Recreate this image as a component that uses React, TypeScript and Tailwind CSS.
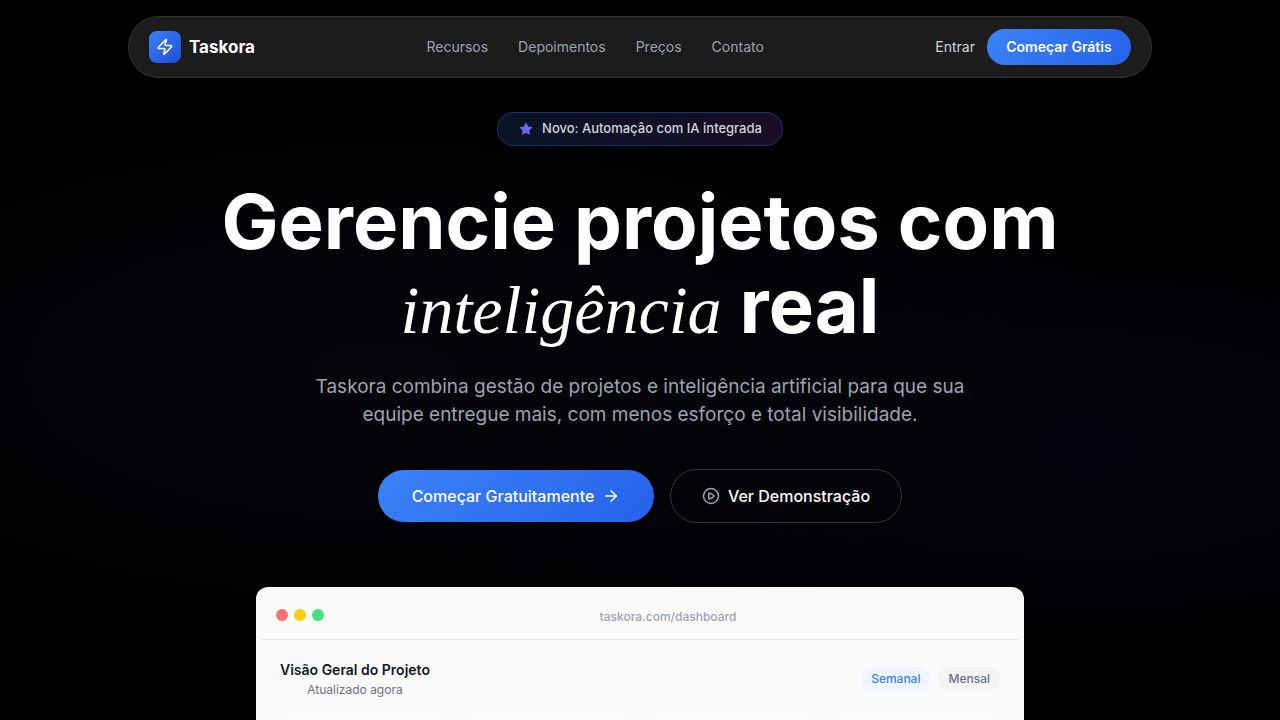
import { ArrowRight, CirclePlay, Zap } from 'lucide-react';

const navLinks = [
  { label: 'Recursos', href: '#recursos' },
  { label: 'Depoimentos', href: '#depoimentos' },
  { label: 'Preços', href: '#precos' },
  { label: 'Contato', href: '#contato' },
];

function Navbar() {
  return (
    <header className="w-full max-w-5xl rounded-full border border-white/10 bg-white/11 px-5 py-3">
      <div className="flex items-center justify-between gap-4">
        <a href="#" className="flex items-center gap-2">
          <span className="flex h-8 w-8 items-center justify-center rounded-lg bg-linear-135/srgb from-[#3b82f6] to-[#1d4ed8]">
            <Zap className="h-[18px] w-[18px] text-white" />
          </span>
          <span className="text-[17px] font-bold leading-6 text-white">Taskora</span>
        </a>

        <nav className="hidden gap-[30px] md:flex">
          {navLinks.map((link) => (
            <a key={link.href} href={link.href} className="text-sm text-[#9ca3af] hover:text-white">
              {link.label}
            </a>
          ))}
        </nav>

        <div className="flex items-center gap-3">
          <a href="#entrar" className="text-sm text-[#d1d5db] hover:text-white">
            Entrar
          </a>
          <button
            type="button"
            className="flex h-9 min-w-36 items-center justify-center rounded-full bg-linear-135/srgb from-[#3b82f6] to-[#2563eb] text-sm font-semibold text-white"
          >
            Começar Grátis
          </button>
        </div>
      </div>
    </header>
  );
}

function NewsBadge() {
  return (
    <div className="mt-[34px] flex h-[34px] min-w-[286px] items-center justify-center gap-2 rounded-full border border-[#3b82f6]/30 bg-linear-to-r/srgb from-[#3b82f6]/15 to-[#a855f7]/15 px-4">
      <svg className="h-4 w-4" viewBox="0 0 24 24" aria-hidden="true">
        <defs>
          <linearGradient id="star" x1="0" y1="0" x2="1" y2="1">
            <stop offset="0" stopColor="#4f7cff" />
            <stop offset="1" stopColor="#7c5cf6" />
          </linearGradient>
        </defs>
        <path
          fill="url(#star)"
          d="M12 2l3.09 6.26L22 9.27l-5 4.87 1.18 6.88L12 17.77l-6.18 3.25L7 14.14 2 9.27l6.91-1.01L12 2z"
        />
      </svg>
      <span className="text-[13px] font-medium text-[#d1d5db]">Novo: Automação com IA integrada</span>
    </div>
  );
}

function DashboardPreview() {
  return (
    <div className="mt-16 w-full max-w-3xl rounded-xl bg-[#fafafa] px-1 pt-1">
      <div className="flex h-[49px] items-center border-b border-[#e5e7eb] px-4">
        <div className="flex gap-[6px]">
          <span className="h-3 w-3 rounded-full bg-[#f87171]" />
          <span className="h-3 w-3 rounded-full bg-[#facc15]" />
          <span className="h-3 w-3 rounded-full bg-[#4ade80]" />
        </div>
        <p className="flex-1 pl-2 pt-[3px] text-center text-xs font-medium text-[#9ca3af]">taskora.com/dashboard</p>
      </div>

      <div className="px-5 pt-5">
        <div className="flex items-center justify-between">
          <div className="text-center">
            <h2 className="text-sm font-semibold text-[#111827]">Visão Geral do Projeto</h2>
            <p className="mt-[2px] text-xs text-[#6b7280]">Atualizado agora</p>
          </div>
          <div className="flex gap-2">
            <button
              type="button"
              className="h-6 rounded-full bg-[#eff6ff] px-[10px] text-xs font-medium text-[#3b82f6]"
            >
              Semanal
            </button>
            <button
              type="button"
              className="h-6 rounded-full bg-[#f3f4f6] px-[10px] text-xs font-medium text-[#6b7280]"
            >
              Mensal
            </button>
          </div>
        </div>

        <div className="mt-5 grid grid-cols-4 gap-3">
          <div className="h-6 rounded-lg border border-[#f3f4f6] bg-white" />
          <div className="h-6 rounded-lg border border-[#f3f4f6] bg-white" />
          <div className="h-6 rounded-lg border border-[#f3f4f6] bg-white" />
          <div className="h-6 rounded-lg border border-[#f3f4f6] bg-white" />
        </div>
      </div>
    </div>
  );
}

export default function App() {
  return (
    <div className="min-h-screen overflow-hidden bg-black bg-[radial-gradient(ellipse_at_30%_50%,#04060b_0%,transparent_60%),radial-gradient(ellipse_at_85%_60%,#04040c_0%,transparent_45%)] font-['Inter',sans-serif]">
      <div className="flex flex-col items-center px-4 pt-4">
        <Navbar />
        <main className="flex w-full flex-col items-center">
          <NewsBadge />

          <h1 className="mt-[33px] text-center text-[76px] font-bold leading-[84px] text-white">
            Gerencie projetos com
            <br />
            <em className="font-['Liberation_Serif',serif] text-[68px] font-normal italic leading-none">
              inteligência
            </em>{' '}
            real
          </h1>

          <p className="mt-[26px] max-w-[680px] text-center text-[19px] leading-7 text-[#9ca3af]">
            Taskora combina gestão de projetos e inteligência artificial para que sua equipe entregue mais, com menos
            esforço e total visibilidade.
          </p>

          <div className="mt-10 flex flex-wrap items-center justify-center gap-4">
            <button
              type="button"
              className="flex h-[52px] min-w-[276px] items-center justify-center gap-2 rounded-full bg-linear-135/srgb from-[#3b82f6] to-[#2563eb] font-medium text-white"
            >
              Começar Gratuitamente
              <ArrowRight className="h-[18px] w-[18px]" />
            </button>
            <button
              type="button"
              className="flex h-[54px] min-w-[232px] items-center justify-center gap-2 rounded-full border border-white/20 font-medium text-white"
            >
              <CirclePlay className="h-[18px] w-[18px] text-[#9ca3af]" />
              Ver Demonstração
            </button>
          </div>

          <DashboardPreview />
        </main>
      </div>
    </div>
  );
}
